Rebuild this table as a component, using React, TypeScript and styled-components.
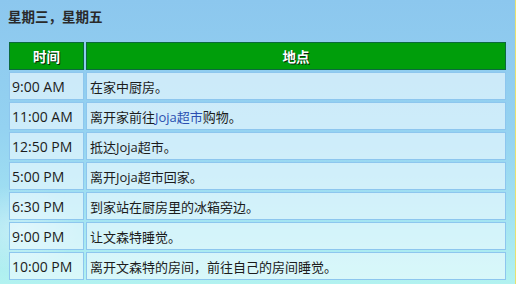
import React from "react";
import styled, { createGlobalStyle } from "styled-components";

type Entry = {
  time: string;
  place: React.ReactNode;
};

const GlobalStyle = createGlobalStyle`
  html, body {
    margin: 0;
    padding: 0;
    height: 100%;
  }
  body {
    font-family: "Open Sans", "Noto Sans CJK SC", sans-serif;
    color: #1c1c1c;
  }
  #root {
    height: 100%;
  }
`;

const Page = styled.div`
  position: relative;
  box-sizing: border-box;
  width: 516px;
  height: 284px;
  overflow: hidden;
  padding: 6px 8px 0 7px;
  background: linear-gradient(180deg, #8cc7ee 0%, #94d2f1 45%, #a2e2f2 75%, #b2f2f0 100%);
  border-right: 1px solid #e8e070;
`;

const Cloud = styled.div`
  position: absolute;
  left: -40px;
  bottom: 10px;
  width: 120px;
  height: 90px;
  border-radius: 50%;
  background: radial-gradient(ellipse at center, rgba(255, 255, 255, 0.35) 0%, rgba(255, 255, 255, 0) 70%);
  pointer-events: none;
`;

const Heading = styled.h3`
  margin: 0 0 0 1px;
  height: 20px;
  line-height: 20px;
  font-family: "Noto Sans CJK SC", sans-serif;
  font-size: 13.5px;
  font-weight: 700;
  color: #2a2a2a;
`;

const Schedule = styled.table`
  position: relative;
  margin-top: 14px;
  width: 501px;
  border-collapse: separate;
  border-spacing: 2px;
  table-layout: fixed;
`;

const HeadCell = styled.th<{ $w?: number }>`
  box-sizing: border-box;
  height: 28px;
  width: ${(p) => (p.$w ? `${p.$w}px` : "auto")};
  padding: 0;
  background: #009e0b;
  border: 1px solid #0b6a3c;
  color: #ffffff;
  font-family: "Noto Sans CJK SC", sans-serif;
  font-size: 13.5px;
  font-weight: 700;
  text-align: center;
  text-shadow: 1px 1px 0 #0a2a10;
`;

const Cell = styled.td<{ $time?: boolean }>`
  box-sizing: border-box;
  height: 28px;
  padding: 0 0 0 ${(p) => (p.$time ? "2px" : "3px")};
  background: rgba(240, 252, 255, 0.62);
  border: 1px solid #8dc6ee;
  font-size: ${(p) => (p.$time ? "14px" : "13px")};
  white-space: nowrap;
  vertical-align: middle;
`;

const Link = styled.span`
  color: #2b4fb0;
`;

const entries: Entry[] = [
  { time: "9:00 AM", place: "在家中厨房。" },
  {
    time: "11:00 AM",
    place: (
      <>
        离开家前往<Link>Joja超市</Link>购物。
      </>
    ),
  },
  { time: "12:50 PM", place: "抵达Joja超市。" },
  { time: "5:00 PM", place: "离开Joja超市回家。" },
  { time: "6:30 PM", place: "到家站在厨房里的冰箱旁边。" },
  { time: "9:00 PM", place: "让文森特睡觉。" },
  { time: "10:00 PM", place: "离开文森特的房间，前往自己的房间睡觉。" },
];

export default function App() {
  return (
    <>
      <GlobalStyle />
      <Page>
        <Cloud />
        <Heading>星期三，星期五</Heading>
        <Schedule>
          <thead>
            <tr>
              <HeadCell $w={75}>时间</HeadCell>
              <HeadCell>地点</HeadCell>
            </tr>
          </thead>
          <tbody>
            {entries.map((e) => (
              <tr key={e.time + String(e.place)}>
                <Cell $time>{e.time}</Cell>
                <Cell>{e.place}</Cell>
              </tr>
            ))}
          </tbody>
        </Schedule>
      </Page>
    </>
  );
}
